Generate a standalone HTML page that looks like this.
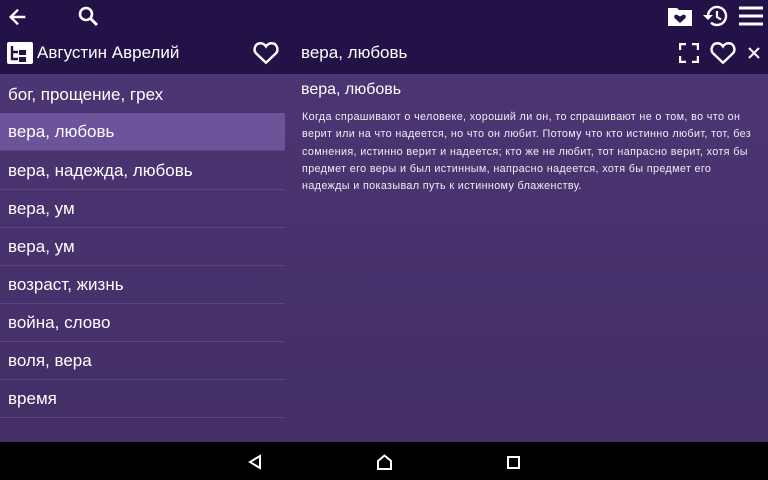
<!DOCTYPE html><html><head><meta charset="utf-8"><style>
body{margin:0;width:768px;height:480px;overflow:hidden;font-family:"Liberation Sans",sans-serif;color:#fff;position:relative;background:#000}
.hdr{position:absolute;left:0;top:0;width:768px;height:74px;background:#231248}
.body{position:absolute;left:0;top:74px;width:768px;height:368px;background:linear-gradient(#4b3573,#432f66)}
.nav{position:absolute;left:0;top:442px;width:768px;height:38px;background:#000}
.row{position:absolute;left:0;width:285px;height:38px;border-bottom:1px solid #594480;font-size:17px;line-height:38px;padding-left:8px;box-sizing:border-box}
.sel{background:#6d5399}
svg{position:absolute}
</style></head><body>
<div class="hdr"></div>
<div class="body"></div>
<div class="nav"></div>
<svg style="left:7px;top:6px" width="22" height="22" viewBox="0 0 24 24"><path d="M20 12H5M12 4l-8 8 8 8" stroke="#fff" stroke-width="2.6" fill="none"/></svg>
<svg style="left:76px;top:4px" width="24" height="24" viewBox="0 0 24 24"><circle cx="10" cy="10" r="6" stroke="#fff" stroke-width="2.6" fill="none"/><path d="M14.5 14.5L21 21" stroke="#fff" stroke-width="3"/></svg>
<svg style="left:667px;top:5px" width="26" height="22" viewBox="0 0 26 22"><path d="M1 3h9l2 2h13v16H1z" fill="#fff"/><path d="M13 18l-5-4.5c-2-2 0-5 2.5-3.5L13 11.5l2.5-1.5C18 8.5 20 11.5 18 13.5z" fill="#231248"/></svg>
<svg style="left:702px;top:4px" width="26" height="24" viewBox="0 0 26 24"><path d="M6 12a9 9 0 1 1 3 6.7" stroke="#fff" stroke-width="2.4" fill="none"/><path d="M1 11h10l-5 5z" fill="#fff"/><path d="M15 7v6l4 2.5" stroke="#fff" stroke-width="2.2" fill="none"/></svg>
<svg style="left:739px;top:6px" width="24" height="20" viewBox="0 0 24 20"><path d="M0 2h24M0 10h24M0 18h24" stroke="#fff" stroke-width="3"/></svg>
<svg style="left:7px;top:42px" width="26" height="22" viewBox="0 0 26 22"><rect x="0" y="0" width="26" height="22" rx="2" fill="#fff"/><path d="M5 4v13h6M5 10h6" stroke="#231248" stroke-width="2.4" fill="none"/><rect x="12" y="8" width="7" height="5" fill="#231248"/><rect x="12" y="15" width="7" height="5" fill="#231248"/></svg>
<div style="position:absolute;left:37px;top:43px;font-size:17px">Августин Аврелий</div>
<svg style="left:253px;top:41px" width="26" height="24" viewBox="0 0 24 22"><path d="M12 20l-9-8.5C0 8.5 1.5 2 7 2c2.5 0 4 1.5 5 3 1-1.5 2.5-3 5-3 5.5 0 7 6.5 4 9.5z" stroke="#fff" stroke-width="2.2" fill="none"/></svg>
<div style="position:absolute;left:301px;top:43px;font-size:17px">вера, любовь</div>
<svg style="left:679px;top:43px" width="20" height="20" viewBox="0 0 20 20"><path d="M1 7V1h6M13 1h6v6M19 13v6h-6M7 19H1v-6" stroke="#fff" stroke-width="2.4" fill="none"/></svg>
<svg style="left:710px;top:41px" width="26" height="24" viewBox="0 0 24 22"><path d="M12 20l-9-8.5C0 8.5 1.5 2 7 2c2.5 0 4 1.5 5 3 1-1.5 2.5-3 5-3 5.5 0 7 6.5 4 9.5z" stroke="#fff" stroke-width="2.2" fill="none"/></svg>
<svg style="left:748px;top:47px" width="12" height="12" viewBox="0 0 12 12"><path d="M1 1l10 10M11 1L1 11" stroke="#fff" stroke-width="2"/></svg>
<div class="row" style="top:76px">бог, прощение, грех</div>
<div class="row sel" style="top:113px">вера, любовь</div>
<div class="row" style="top:152px">вера, надежда, любовь</div>
<div class="row" style="top:190px">вера, ум</div>
<div class="row" style="top:228px">вера, ум</div>
<div class="row" style="top:266px">возраст, жизнь</div>
<div class="row" style="top:304px">война, слово</div>
<div class="row" style="top:342px">воля, вера</div>
<div class="row" style="top:380px">время</div>
<div style="position:absolute;left:301px;top:81px;font-size:16px">вера, любовь</div>
<div style="position:absolute;left:302px;top:109px;width:452px;font-size:10.8px;letter-spacing:0.35px;line-height:17.3px;color:#f0ecf5">Когда спрашивают о человеке, хороший ли он, то спрашивают не о том, во что он верит или на что надеется, но что он любит. Потому что кто истинно любит, тот, без сомнения, истинно верит и надеется; кто же не любит, тот напрасно верит, хотя бы предмет его веры и был истинным, напрасно надеется, хотя бы предмет его надежды и показывал путь к истинному блаженству.</div>
<svg style="left:247px;top:454px" width="16" height="16" viewBox="0 0 16 16"><path d="M13 2L3 8l10 6z" stroke="#fff" stroke-width="2" fill="none"/></svg>
<svg style="left:376px;top:454px" width="17" height="16" viewBox="0 0 17 16"><path d="M2 15V7l6.5-5.5L15 7v8z" stroke="#fff" stroke-width="2" fill="none"/></svg>
<svg style="left:507px;top:456px" width="13" height="13" viewBox="0 0 13 13"><rect x="1" y="1" width="11" height="11" stroke="#fff" stroke-width="2" fill="none"/></svg>
</body></html>
